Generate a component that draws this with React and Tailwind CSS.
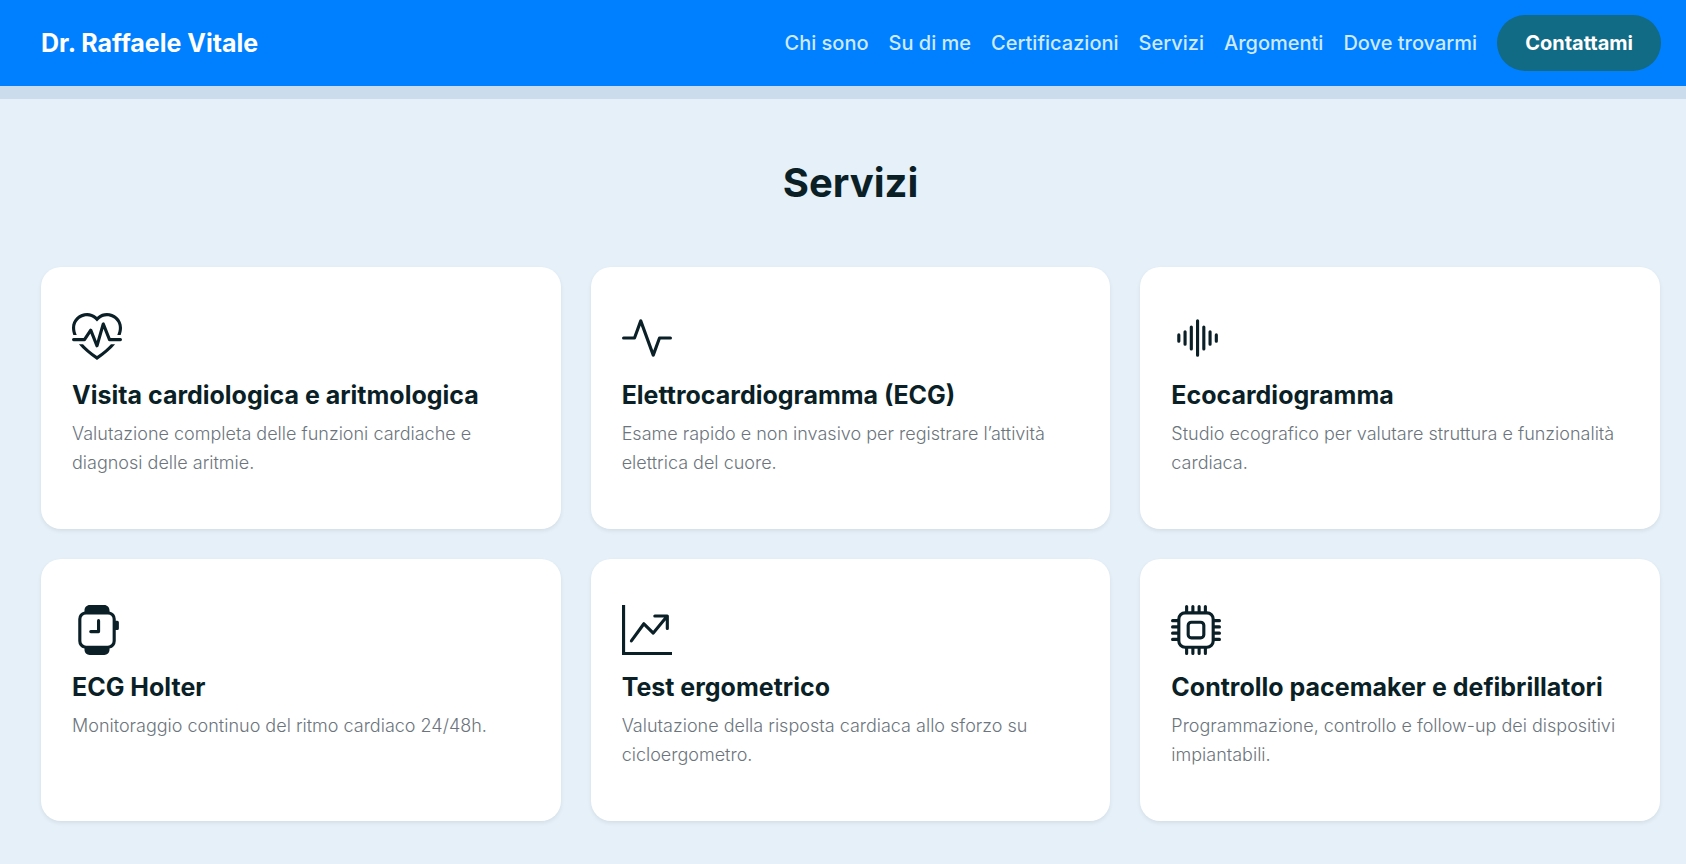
import { BsHeartPulse, BsActivity, BsSoundwave, BsSmartwatch, BsGraphUpArrow, BsCpu } from "react-icons/bs";

const links = [
  ["Chi sono", "#chi-sono"],
  ["Su di me", "#su-di-me"],
  ["Certificazioni", "#certificazioni"],
  ["Servizi", "#servizi"],
  ["Argomenti", "#argomenti"],
  ["Dove trovarmi", "#dove-trovarmi"],
];

const services = [
  { icon: BsHeartPulse, title: "Visita cardiologica e aritmologica", text: "Valutazione completa delle funzioni cardiache e diagnosi delle aritmie." },
  { icon: BsActivity, title: "Elettrocardiogramma (ECG)", text: "Esame rapido e non invasivo per registrare l’attività elettrica del cuore." },
  { icon: BsSoundwave, title: "Ecocardiogramma", text: "Studio ecografico per valutare struttura e funzionalità cardiaca." },
  { icon: BsSmartwatch, title: "ECG Holter", text: "Monitoraggio continuo del ritmo cardiaco 24/48h." },
  { icon: BsGraphUpArrow, title: "Test ergometrico", text: "Valutazione della risposta cardiaca allo sforzo su cicloergometro." },
  { icon: BsCpu, title: "Controllo pacemaker e defibrillatori", text: "Programmazione, controllo e follow-up dei dispositivi impiantabili." },
];

function Header() {
  return (
    <header className="flex items-center justify-between border-b-[13px] border-[#cbdded] bg-[#007fff] bg-clip-padding py-[15px] pr-[25px] pl-[41px]">
      <a href="#top" className="text-[25px] leading-8 font-bold text-white">Dr. Raffaele Vitale</a>
      <nav className="flex items-center gap-5 text-[20px] font-medium text-[#cdeafe]">
        {links.map(([label, href]) => (
          <a key={href} href={href}>{label}</a>
        ))}
        <a href="#contattami" className="flex h-14 items-center rounded-full bg-[#116b85] px-7 font-bold text-white">
          Contattami
        </a>
      </nav>
    </header>
  );
}

function ServiceCard({ icon: Icon, title, text }) {
  return (
    <article className="rounded-[20px] bg-white px-[31px] pt-[46px] pb-[52px] shadow-[0_2px_4px_rgba(0,0,0,0.075)]">
      <Icon className="size-[50px]" aria-hidden="true" />
      <h3 className="mt-4 text-[25px] leading-[32px] font-bold">{title}</h3>
      <p className="mt-2 min-h-[58px] text-[18px] leading-[29px] font-light text-[#6c757d]">{text}</p>
    </article>
  );
}

export default function App() {
  return (
    <div id="top" className="min-h-screen bg-[#e5f0f9] font-['Inter',sans-serif] text-[#0b1f27]">
      <Header />
      <main id="servizi" className="pt-[60px] pr-[26px] pb-[43px] pl-[41px]">
        <h2 className="text-center text-[40px] leading-[48px] font-bold">Servizi</h2>
        <div className="mt-[60px] grid grid-cols-3 gap-[30px]">
          {services.map((s) => (
            <ServiceCard key={s.title} {...s} />
          ))}
        </div>
      </main>
    </div>
  );
}
